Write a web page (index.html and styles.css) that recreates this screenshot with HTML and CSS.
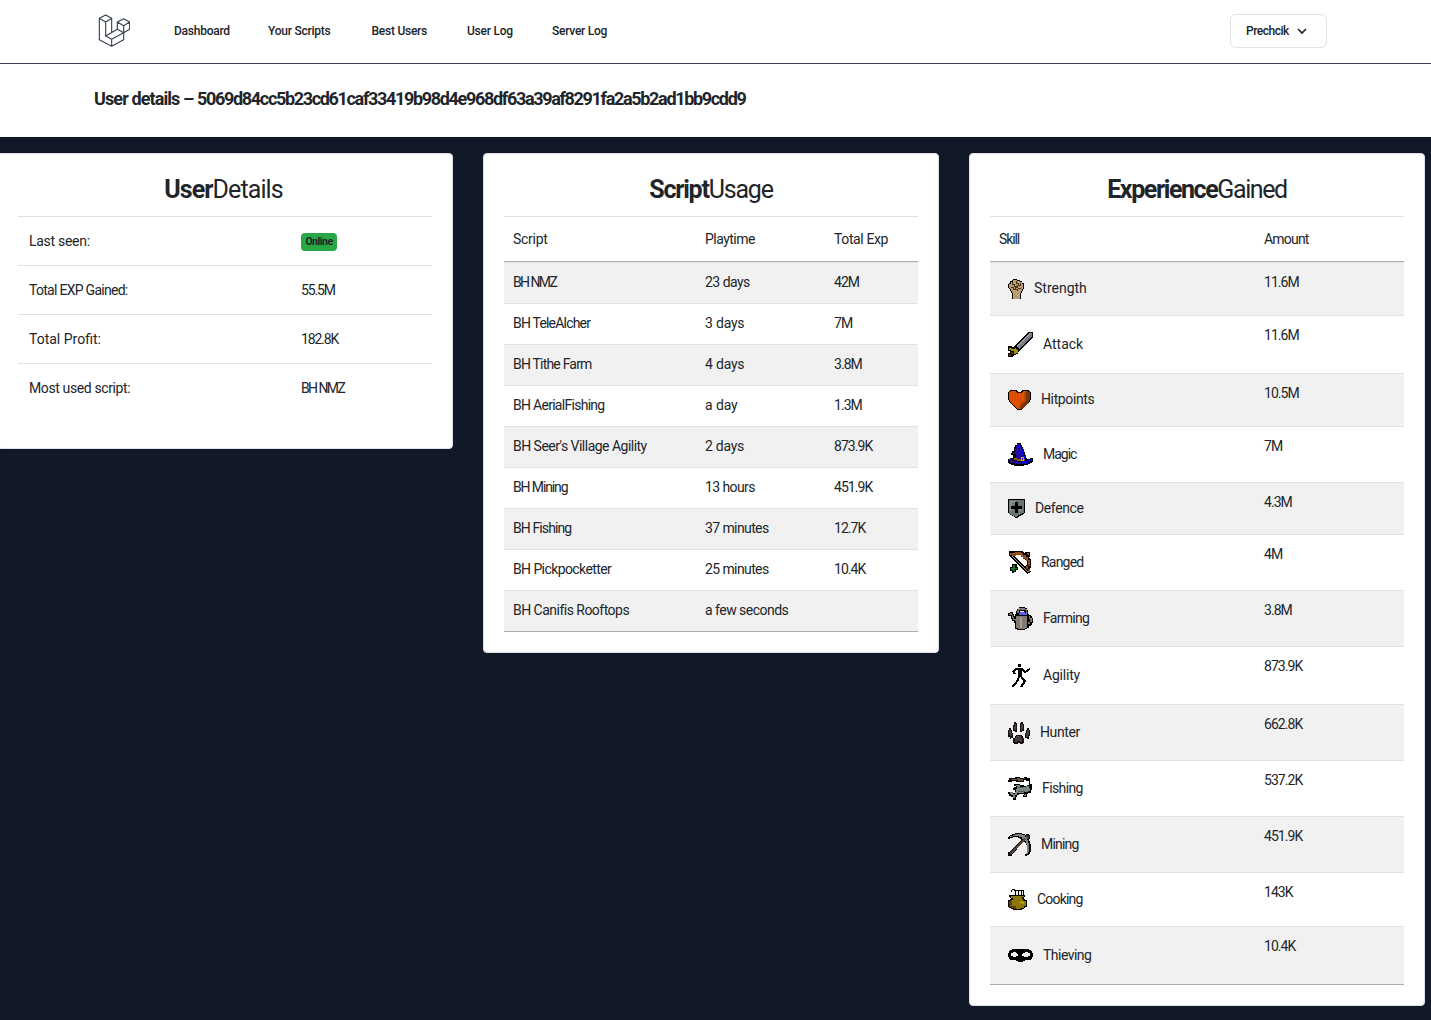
FILE: index.html
```html
<!DOCTYPE html>
<html lang="en">
<head>
<meta charset="utf-8">
<title>User details</title>
<link rel="stylesheet" href="styles.css">
</head>
<body>
<nav class="navbar">
  <svg class="logo" viewBox="54 42 96 99" fill="none" stroke="#374151" stroke-width="3.4" stroke-linejoin="round"><path d="M58 55L77 45 95 55 77 66ZV119L95 139 131 119V98L149 88V66L131 56 112 66V88L77 108V66M58 55V119L95 139M95 55V98M77 108L95 118V139M95 118L131 98V77L112 66M131 77L149 66M112 88L131 98"/></svg>
  <div class="links"><a>Dashboard</a><a>Your Scripts</a><a>Best Users</a><a>User Log</a><a>Server Log</a></div>
  <button class="account">Prechcik <svg viewBox="0 0 10 8" width="10" height="8" fill="none" stroke="#212529" stroke-width="1.7"><path d="M1 2L5 6 9 2"/></svg></button>
</nav>
<header class="heading"><h1>User details – <span class="hash">5069d84cc5b23cd61caf33419b98d4e968df63a39af8291fa2a5b2ad1bb9cdd9</span></h1></header>
<main class="cards">
  <section class="card details">
    <h2><b>User</b>Details</h2>
    <table>
      <tr><td class="t3">Last seen:</td><td><span class="badge">Online</span></td></tr>
      <tr><td class="t7">Total EXP Gained:</td><td class="t11">55.5M</td></tr>
      <tr><td>Total Profit:</td><td class="t11">182.8K</td></tr>
      <tr><td class="t4">Most used script:</td><td class="t16">BH NMZ</td></tr>
    </table>
  </section>
  <section class="card usage">
    <h2><b>Script</b>Usage</h2>
    <table>
      <thead><tr><th class="t3">Script</th><th class="t5">Playtime</th><th class="t4">Total Exp</th></tr></thead>
      <tbody>
      <tr><td class="t16">BH NMZ</td><td class="t5">23 days</td><td>42M</td></tr>
      <tr><td class="t8">BH TeleAlcher</td><td class="t2">3 days</td><td>7M</td></tr>
      <tr><td class="t8">BH Tithe Farm</td><td class="t2">4 days</td><td>3.8M</td></tr>
      <tr><td class="t7">BH AerialFishing</td><td class="t1">a day</td><td>1.3M</td></tr>
      <tr><td class="t5">BH Seer's Village Agility</td><td class="t3">2 days</td><td>873.9K</td></tr>
      <tr><td class="t11">BH Mining</td><td class="t6">13 hours</td><td>451.9K</td></tr>
      <tr><td class="t9">BH Fishing</td><td class="t6">37 minutes</td><td>12.7K</td></tr>
      <tr><td class="t6">BH Pickpocketter</td><td class="t6">25 minutes</td><td>10.4K</td></tr>
      <tr><td class="t5">BH Canifis Rooftops</td><td class="t5">a few seconds</td><td></td></tr>
      </tbody>
    </table>
  </section>
  <section class="card skills">
    <h2><b>Experience</b>Gained</h2>
    <table>
      <thead><tr><th class="t11">Skill</th><th class="t8">Amount</th></tr></thead>
      <tbody>
      <tr><td><div class="skill"><svg width="16" height="20"><path d="M5 0h4v1h3v1h2v2h2v6h-1v2h-1v2h-1v6H4v-6H3v-2H2v-2H1V9H0V5h1V4h1V2h2V1h1z"/><path fill="#bf9c70" d="M5 1h4v1h3v1h2v2h1v5h-1v2h-1v2h-1v6H5v-6H4v-2H3v-2H2V9H1V5h2V3h2z"/><path stroke="#49351f" fill="none" d="M4.500 3v2h2v2h2M8.500 2v2h2v2M12.500 4v2h-3v2h-2v2h2v2M3 8.500h2v2h2M13 9.500h-3"/></svg><span>Strength</span></div></td><td>11.6M</td></tr>
      <tr><td><div class="skill"><svg width="25" height="25"><path d="M20 0h5v5L11 19l-1 1v2H8v1H6v1H5v1H0v-4h2v-2H0v-5h4v1h2z"/><path fill="#777b82" d="M21 1h3v3L11 17l-3-3z"/><path stroke="#9a9da3" d="M9 14.500L22.500 1"/><path fill="#9d8e0c" d="M1 16h3v1h3v-1h1l2 3v2H8v1H6v-3H3v-1H1z"/><path fill="#63320c" d="M3 20h2v2H3v2H1v-2h2z"/></svg><span>Attack</span></div></td><td>11.6M</td></tr>
      <tr><td><div class="skill"><svg width="23" height="20"><path d="M2 0h7v1h1v1h3V1h1V0h7v1h1v1h1v8h-1v2h-1v1h-1v1h-1v1h-1v1h-1v1h-1v1h-1v1h-1v1H9v-1H8v-1H7v-1H6v-1H5v-1H4v-1H3v-1H2v-1H1v-2H0V2h1V1h1z"/><path fill="#df4f00" d="M2 1h6v1h1v1h5V2h1V1h5v1h2v8h-1v2h-1v1L14 19H9L3 13v-1H2v-2H1V2h1z"/><path fill="#7c3409" d="M18 1h2v1h2v8h-1v2h-1v1L14 19h-2v-3l6-6z"/><path fill="#b94507" d="M16 2h2v8l-5 5h-2l5-6z"/></svg><span class="t4">Hitpoints</span></div></td><td>10.5M</td></tr>
      <tr><td><div class="skill"><svg width="25" height="23"><path d="M9 0h4v2h1v2h1v2h1v3h1v3h1v3h1v1h3v-1h3v4h-1v1h-2v1h-2v1h-4v1H6v-1H3v-1H1v-1H0v-4h2v-1h3v-3H3v-2h1V8h2V4h1V2h2z"/><path fill="#22089f" d="M9 1h3v2h1v3h1v4h1v4h1v3H7v-3h1v-3H5v-2h2V5h1V3h1zM1 16h3v2h5v1h7v1h3v1H7v-1H3v-1H1z"/><path fill="#0000f5" d="M10 2h2v3h-2zM14 6h1v3h1v4h1v3h-2v-4h-1zM24 16v2h-2v1h-3v1h-5v-2h5v-1h3v-1z"/><path fill="#8a580c" d="M6 15h3v1h8v2H9v-1H6z"/><path fill="#dda828" d="M13 14h3v4h-3z"/><path fill="#22089f" d="M14 15h1v2h-1z"/></svg><span class="t10">Magic</span></div></td><td>7M</td></tr>
      <tr><td><div class="skill"><svg width="17" height="19"><path d="M0 0h17v14h-1v1h-1v1h-2v1h-2v1h-1v1H7v-1H6v-1H4v-1H2v-1H1v-1H0z"/><path fill="#6d7572" d="M1 1h15v13h-2v1h-2v1h-2v1h-1v1H7v-1H5v-1H3v-1H1z"/><path fill="#8a918e" d="M2 2h6v2H2zM2 4h2v8H2zM11 12h3v-3h-3z"/><path d="M7 3h3v4h4v3h-4v4H7v-4H3V7h4z"/></svg><span class="t4">Defence</span></div></td><td>4.3M</td></tr>
      <tr><td><div class="skill"><svg width="23" height="23"><path stroke="#000" stroke-width="4.500" fill="none" d="M1 2.500h5l2-1h5l2 2.500 3 2 3 4v5l-2 2 2 5"/><path stroke="#000" stroke-width="3" d="M2 3l19 19"/><path d="M17 1h5v5h-4V4h-1z"/><path fill="#8e4a19" d="M2 2h5V1h6v1h2v2h3v2h2v3h2v6h-2v3h2v3h-2v-3h-2v-3h2v-5h-2V8h-3V6h-2V4H8v1H4V4H2zM19 2h2v2h-2z"/><path stroke="#9b9b9b" stroke-width="1.400" d="M4 5l16 16"/><path d="M4 13h5v3h1v3H8v2H6v1H4v-2H2v-4h2z"/><path fill="#137b19" d="M5 14h2v3h2v1H7v2H5v-1H3v-2h2z"/></svg><span class="t8">Ranged</span></div></td><td>4M</td></tr>
      <tr><td><div class="skill"><svg width="25" height="23"><path d="M11 0h6v1h2v2h1v4h1v1h2v1h1v2h1v5h-1v2h-1v1h-2v2h-2v1h-2v1H9v-1H7v-6H6v-2H4v-2H3V9H0V6h2V5h3v2h1v2h1V7h1V4h1V2h2z"/><path fill="#817a73" d="M2 6h2v2h1v2h1v2h2v2H7v-1H5v-2H4V8H1V7h1zM8 9h11v12h-2v1h-7v-1H8zM21 9h1v2h2v4h-2v2h-2v-2h2v-3h-1zM11 1h6v1h2v5h-1V3h-7v3H9V4h1V2h1z"/><path fill="#a79f96" d="M12 10h2v11h-2z"/><path fill="#f1f1f1" d="M12 4h4v1h-4z"/><path fill="#5860ee" d="M12 5h5v1h2v2H11V6h1z"/></svg><span class="t7">Farming</span></div></td><td>3.8M</td></tr>
      <tr><td><div class="skill"><svg width="25" height="25"><path d="M10 1h3v3h-3zM10 5h4v9h-4z"/><path stroke="#000" stroke-width="2" fill="none" d="M7 11L5 8.500 8 6h6l3 3 5-3M11 13l-1 4-3 4-3 3M13 13l1 2 3 3-4 6"/></svg><span class="t2">Agility</span></div></td><td>873.9K</td></tr>
      <tr><td><div class="skill"><svg width="22" height="23"><g fill="#151112"><path d="M6 1h2v1h1v9H7v-1H5V4h1zM13 1h2v2h1v7h-2v1h-2V2h1zM1 7h2v2h1v3h1v5H3v1H2v-2H0V9h1zM19 7h2v2h1v6h-1v3h-2v-1h-2v-5h1V9h1zM8 14h6v1h1v2h1v5h-1v1h-3v-1h-2v1H6v-1H5v-5h2v-2h1z"/></g><path fill="#4a3d3f" d="M7 3h1v6H6V5h1zM13 3h2v5h-1v2h-1zM1 9h2v3h1v3H2v-2H1zM19 9h2v5h-1v2h-2v-4h1zM8 15h5v2h1v4h-2v-1H9v1H7v-4h1z"/></svg><span class="t4">Hunter</span></div></td><td>662.8K</td></tr>
      <tr><td><div class="skill"><svg width="24" height="23"><path d="M1 1h6V0h5v1h4V0h3v1h3v6h2v6h-1v3h-3v1h-1v3h-4v-2h1v-1h-5v1H9v2H8v3H5v-3H3v-1H1v-2H0v-2h5v1h2v-3H5v-2h1v-1h2V9H6V7h6v1h4v1h3V8h2V4h-3V3h-2v2H8V4H4v1H0V3h1z"/><path fill="#665744" d="M3 2h6v1H3zM9 1h3v1h3V1h2v1h-2v2h-5V3H9z"/><path fill="#7c8585" d="M8 8h4v2h6V9h3v2h1v3h-2v1h-4v1H9v2H7v3H5v-3H3v-1H2v-2h3v2h2v-2h1v-3h1V9H8zM17 17h1v2h-2z"/><path fill="#505758" d="M10 14h7v1h-7zM10 10h5v1h-5z"/></svg><span class="t6">Fishing</span></div></td><td>537.2K</td></tr>
      <tr><td><div class="skill"><svg width="23" height="23"><path d="M7 0h7v1h3v1h1V1h3v1h1v4h-1v2h1v3h1v8h-1v2h-1v1h-2v1h-2v-2h1v-1h1v-8h-1v-2h-1V9h-2v1h-1v1h-1v1h-1v1h-1v1h-1v1h-1v1H9v1H8v1H7v1H6v1H5v1H4v2H0v-4h2v-1h1v-1h1v-1h1v-1h1v-1h1v-1h1v-1h1v-1h1v-1h1V9h1V8h1V6h-1V5h-2V4H5v1H2v1H0V4h1V3h1V2h2V1h3z"/><path fill="#7d8085" d="M7 1h7v1h3v2h2v3h1v3h1v9h-1v2h-2v-1h1v-9h-1V8h-1V7h-1V6h-2V4h-3V3H5v1H2V3h3V2h2z"/><path stroke="#54443b" stroke-width="1.500" d="M2 21L17 6"/><path fill="#3e302b" d="M18 2h3v4h-2V4h-1z"/></svg><span class="t8">Mining</span></div></td><td>451.9K</td></tr>
      <tr><td><div class="skill"><svg width="19" height="21"><path d="M4 0h3v1h9v5h1v2h-1v2h1v1h2v7h-2v1h-1v1h-2v1H5v-1H3v-1H1v-1H0v-7h2v-1h1V9H2V8H1V6h4V3H3V1h1z"/><path fill="#e8f0df" d="M4 1h2v1h1v4H5V3H4zM8 2h2v4H8zM11 2h2v4h-2zM14 2h1v4h-1z"/><path fill="#8c7608" d="M3 7h13v1h-2v2h1v2h3v5h-2v2h-3v1H6v-1H3v-1H1v-6h2v-1h2V9H3z"/><path fill="#5f4306" d="M1 12h3v5h4v3H6v-1H3v-1H1z"/><path fill="#b39e0e" d="M12 12h4v3h-3z"/></svg><span class="t8">Cooking</span></div></td><td>143K</td></tr>
      <tr><td><div class="skill"><svg width="25" height="25"><path fill-rule="evenodd" d="M4 6h17v1h2v1h1v2h1v4h-1v2h-1v1h-6v1h-2v1h-5v-1H8v-1H2v-1H1v-2H0v-4h1V8h1V7h2zM5 9v1H3v3h2v1h3v-1h2v-2H9v-1H8V9zM17 9v1h-2v1h-1v2h2v1h4v-1h2v-3h-2V9z"/></svg><span class="t5">Thieving</span></div></td><td>10.4K</td></tr>
      </tbody>
    </table>
  </section>
</main>
</body>
</html>
```

FILE: styles.css
```css
* { box-sizing: border-box; }
body {
  margin: 0;
  min-height: 1020px;
  overflow: hidden;
  background: #111827;
  color: #212529;
  font: 14px/20px Roboto, sans-serif;
}
.navbar {
  display: flex;
  align-items: flex-start;
  height: 64px;
  padding: 14px 104px 0 98px;
  background: #fff;
  border-bottom: 1px solid #374151;
}
.logo { width: 32px; height: 33px; margin-right: 44px; }
.links {
  display: grid;
  grid-template-columns: 94px 103.5px 95.5px 85px 60px;
  padding-top: 7px;
  font-size: 12px;
  font-weight: 500;
  letter-spacing: -.25px;
  white-space: nowrap;
}
.account {
  display: flex;
  align-items: center;
  gap: 8px;
  width: 97px;
  height: 34px;
  margin-left: auto;
  padding: 0 0 1px 15px;
  border: 1px solid #e0e2e7;
  border-radius: 6px;
  background: #fff;
  color: #212529;
  font: 500 12px/20px Roboto, sans-serif;
  letter-spacing: -.5px;
}
.heading { height: 73px; padding: 25px 94px; background: #fff; }
.heading h1 { margin: 0; font-size: 18px; line-height: 20px; letter-spacing: -.9px; white-space: nowrap; }
.hash { letter-spacing: -1.33px; }
.cards {
  display: grid;
  grid-template-columns: repeat(3, 456px);
  gap: 30px;
  align-items: start;
  margin: 16px 0 0 -3px;
}
.card {
  padding: 20px;
  border: 1px solid #dfe1e6;
  border-radius: 4px;
  background: #fff;
}
.card h2 { margin: 0; height: 42px; padding-top: 1px; font-size: 25px; line-height: 30px; font-weight: 400; text-align: center; letter-spacing: -1.2px; }
table { width: 414px; border-collapse: separate; border-spacing: 0; table-layout: fixed; }
td, th { padding: 9px 9px 0; border-top: 1px solid #dee2e6; text-align: left; vertical-align: top; font-weight: 400; white-space: nowrap; }
.details { height: 296px; }
.details h2 { padding-right: 3px; letter-spacing: -.9px; }
.skills h2 { letter-spacing: -1.4px; }
.details td { height: 49px; padding: 14px 11px 0; }
.details td:first-child { width: 272px; }
.badge {
  display: block;
  width: 36px;
  height: 18px;
  margin-top: 2px;
  border-radius: 4px;
  background: #28a745;
  font-size: 10.5px;
  line-height: 18px;
  font-weight: 700;
  letter-spacing: -.5px;
  text-align: center;
}
th { height: 46px; padding-top: 12px; border-bottom: 1px solid #abafb3; }
tbody tr:nth-child(odd) td { background: #f1f1f1; }
.details tbody tr td { background: #fff; }
.usage tbody td { height: 41px; }
.usage th:nth-child(1) { width: 192px; }
.usage th:nth-child(2) { width: 129px; }
.usage tbody td:last-child, .skills tbody td:last-child { letter-spacing: -.95px; }
.usage tbody tr:last-child td, .skills tbody tr:last-child td { border-bottom: 1px solid #abafb3; }
.usage tbody tr:last-child td { height: 42px; }
.skills th:nth-child(1) { width: 265px; }
.skills tbody td:first-child { padding: 16px 18px; }
.skill { display: flex; align-items: center; gap: 10px; line-height: 16px; }
.skill svg { flex: none; shape-rendering: crispEdges; }
.skill span { padding-bottom: 2px; }

/* Tracking steps for labels */
.t1 { letter-spacing: -.1px; }
.t2 { letter-spacing: -.2px; }
.t3 { letter-spacing: -.28px; }
.t4 { letter-spacing: -.38px; }
.t5 { letter-spacing: -.52px; }
.t6 { letter-spacing: -.6px; }
.t7 { letter-spacing: -.72px; }
.t8 { letter-spacing: -.8px; }
.t9 { letter-spacing: -.9px; }
.t10 { letter-spacing: -1px; }
.t11 { letter-spacing: -1.12px; }
.t16 { letter-spacing: -1.6px; }
```
